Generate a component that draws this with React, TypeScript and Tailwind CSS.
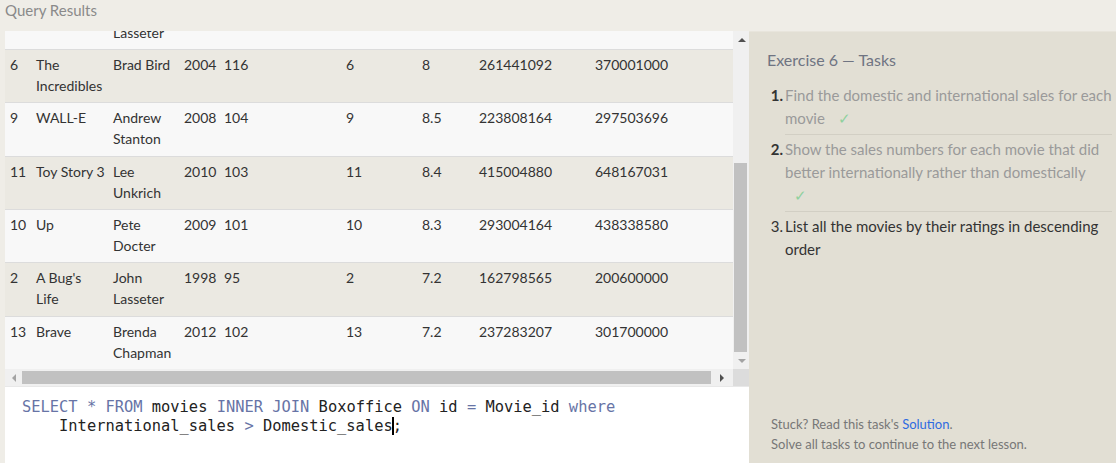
import { useLayoutEffect, useRef } from "react";

interface Row {
  id: string;
  title: string[];
  director: string[];
  year: string;
  length: string;
  movieId: string;
  rating: string;
  domestic: string;
  intl: string;
}

const rows: Row[] = [
  { id: "5", title: ["Finding", "Nemo"], director: ["Andrew", "Stanton"], year: "2003", length: "107", movieId: "5", rating: "8.2", domestic: "380843261", intl: "555900000" },
  { id: "14", title: ["Monsters", "University"], director: ["Dan", "Scanlon"], year: "2013", length: "110", movieId: "14", rating: "7.4", domestic: "268492764", intl: "475066843" },
  { id: "8", title: ["Ratatouille"], director: ["Brad Bird"], year: "2007", length: "115", movieId: "8", rating: "8", domestic: "206445654", intl: "417277164" },
  { id: "12", title: ["Cars 2"], director: ["John", "Lasseter"], year: "2011", length: "120", movieId: "12", rating: "6.4", domestic: "191452396", intl: "368400000" },
  { id: "6", title: ["The", "Incredibles"], director: ["Brad Bird"], year: "2004", length: "116", movieId: "6", rating: "8", domestic: "261441092", intl: "370001000" },
  { id: "9", title: ["WALL-E"], director: ["Andrew", "Stanton"], year: "2008", length: "104", movieId: "9", rating: "8.5", domestic: "223808164", intl: "297503696" },
  { id: "11", title: ["Toy Story 3"], director: ["Lee", "Unkrich"], year: "2010", length: "103", movieId: "11", rating: "8.4", domestic: "415004880", intl: "648167031" },
  { id: "10", title: ["Up"], director: ["Pete", "Docter"], year: "2009", length: "101", movieId: "10", rating: "8.3", domestic: "293004164", intl: "438338580" },
  { id: "2", title: ["A Bug's", "Life"], director: ["John", "Lasseter"], year: "1998", length: "95", movieId: "2", rating: "7.2", domestic: "162798565", intl: "200600000" },
  { id: "13", title: ["Brave"], director: ["Brenda", "Chapman"], year: "2012", length: "102", movieId: "13", rating: "7.2", domestic: "237283207", intl: "301700000" },
];

const columns = ["Id", "Title", "Director", "Year", "Length_minutes", "Movie_id", "Rating", "Domestic_sales", "International_sales"];

const Lines = ({ lines }: { lines: string[] }) => (
  <>
    {lines.map((l) => (
      <span key={l} className="block whitespace-nowrap">
        {l}
      </span>
    ))}
  </>
);

const Arrow = ({ dir, dark }: { dir: "up" | "down" | "left" | "right"; dark?: boolean }) => {
  const points = {
    up: "0,4 4,0 8,4",
    down: "0,0 8,0 4,4",
    left: "4,0 4,8 0,4",
    right: "0,0 0,8 4,4",
  }[dir];
  const vertical = dir === "up" || dir === "down";
  return (
    <svg width={vertical ? 8 : 4} height={vertical ? 4 : 8} viewBox={vertical ? "0 0 8 4" : "0 0 4 8"}>
      <polygon points={points} fill={dark ? "#505050" : "#a3a3a3"} />
    </svg>
  );
};

const Kw = ({ children }: { children: React.ReactNode }) => <span className="text-[#6774a6]">{children}</span>;

const Check = () => <span className="ml-[9px] text-[#8fd19e]">✓</span>;

const cell = "pl-[5px] pt-[4px] pb-[6.3px] align-top leading-[21px]";

export default function App() {
  const scroller = useRef<HTMLDivElement>(null);
  const anchor = useRef<HTMLTableRowElement>(null);

  useLayoutEffect(() => {
    const box = scroller.current;
    const row = anchor.current;
    if (!box || !row) return;
    const offset = row.getBoundingClientRect().top - box.getBoundingClientRect().top + box.scrollTop;
    box.scrollTop = offset - 19;
  }, []);

  return (
    <div className="flex h-[463px] w-[1116px] flex-col overflow-hidden bg-[#efede7] font-['Lato','Open_Sans',sans-serif] text-[#333]">
      <div className="h-[31px] pl-[5px] text-[15px] leading-[20px] text-[#8a8a8a]">Query Results</div>

      <div className="flex min-h-0 flex-1">
        <section className="flex w-[749px] flex-col pl-[5px]">
          <div className="flex h-[338px]">
            <div ref={scroller} className="w-[728px] overflow-hidden bg-[#f8f8f8]">
              <table className="w-[742px] table-fixed border-collapse text-left text-[14px]">
                <colgroup>
                  <col className="w-[26px]" />
                  <col className="w-[77px]" />
                  <col className="w-[71px]" />
                  <col className="w-[40px]" />
                  <col className="w-[122px]" />
                  <col className="w-[76px]" />
                  <col className="w-[57px]" />
                  <col className="w-[116px]" />
                  <col className="w-[157px]" />
                </colgroup>
                <thead>
                  <tr>
                    {columns.map((c) => (
                      <th key={c} className="pl-[5px] pt-[6px] pb-[6px] align-top font-bold leading-[21px]">
                        {c}
                      </th>
                    ))}
                  </tr>
                </thead>
                <tbody>
                  {rows.map((r, i) => (
                    <tr
                      key={r.id}
                      ref={r.id === "6" ? anchor : undefined}
                      className={`border-t border-[#dcdcdc] ${i % 2 === 0 ? "bg-[#ebe9e2]" : "bg-[#f8f8f8]"}`}
                    >
                      <td className={cell}>{r.id}</td>
                      <td className={cell}>
                        <Lines lines={r.title} />
                      </td>
                      <td className={cell}>
                        <Lines lines={r.director} />
                      </td>
                      <td className={cell}>{r.year}</td>
                      <td className={cell}>{r.length}</td>
                      <td className={cell}>{r.movieId}</td>
                      <td className={cell}>{r.rating}</td>
                      <td className={cell}>{r.domestic}</td>
                      <td className={cell}>{r.intl}</td>
                    </tr>
                  ))}
                  <tr className="h-[42px] border-t border-[#dcdcdc]">
                    <td colSpan={9} />
                  </tr>
                </tbody>
              </table>
            </div>

            {/* vertical scrollbar */}
            <div className="flex w-[16px] flex-col bg-[#f0f0f0]">
              <div className="flex h-[17px] items-center justify-center pl-[1px]">
                <Arrow dir="up" dark />
              </div>
              <div className="mt-[115px] ml-[1px] h-[189px] w-[13px] bg-[#c1c1c1]" />
              <div className="flex h-[17px] items-center justify-center pl-[1px]">
                <Arrow dir="down" />
              </div>
            </div>
          </div>

          {/* horizontal scrollbar */}
          <div className="flex h-[17px]">
            <div className="flex w-[728px] items-center bg-[#f0f0f0]">
              <div className="flex w-[17px] justify-center">
                <Arrow dir="left" />
              </div>
              <div className="h-[13px] w-[689px] bg-[#c1c1c1]" />
              <div className="flex w-[22px] justify-center">
                <Arrow dir="right" dark />
              </div>
            </div>
            <div className="w-[16px] bg-[#dcdcdc]" />
          </div>

          {/* editor */}
          <div className="flex-1 border-t border-[#e8e8e8] bg-white pt-[11px] pl-[17px] font-['DejaVu_Sans_Mono',monospace] text-[15.4px] leading-[19px] text-[#222] whitespace-pre">
            <div>
              <Kw>SELECT</Kw> <Kw>*</Kw> <Kw>FROM</Kw> movies <Kw>INNER JOIN</Kw> Boxoffice <Kw>ON</Kw> id <Kw>=</Kw> Movie_id <Kw>where</Kw>
            </div>
            <div>
              {"    "}International_sales <Kw>&gt;</Kw> Domestic_sales
              <span className="-mx-[1px] inline-block h-[18px] w-[2px] bg-black align-[-4px]" />;
            </div>
          </div>
        </section>

        <aside className="flex flex-1 flex-col border-t border-[#e8e5dc] bg-[#e2dfd4] pt-[18px] pr-[4px] pl-[18px]">
          <h2 className="text-[16px] leading-[20px] text-[#6f7482]">Exercise 6 — Tasks</h2>

          <ol className="mt-[14px] text-[15px] leading-[23px]">
            <li className="flex">
              <span className="w-[18px] shrink-0 pr-[2px] text-right font-bold text-[#333]">1.</span>
              <div className="flex-1 border-b border-[#d2cfc4] pb-[4px] text-[#9a9a9a]">
                <span className="block">Find the domestic and international sales for each</span>
                <span className="block">
                  movie <Check />
                </span>
              </div>
            </li>
            <li className="flex pt-[3px]">
              <span className="w-[18px] shrink-0 pr-[2px] text-right font-bold text-[#333]">2.</span>
              <div className="flex-1 border-b border-[#d2cfc4] pb-[4px] text-[#9a9a9a]">
                <span className="block">Show the sales numbers for each movie that did</span>
                <span className="block">better internationally rather than domestically</span>
                <span className="block">
                  <Check />
                </span>
              </div>
            </li>
            <li className="flex pt-[3px]">
              <span className="w-[18px] shrink-0 pr-[2px] text-right text-[#333]">3.</span>
              <div className="flex-1 text-[#333]">
                <span className="block">List all the movies by their ratings in descending</span>
                <span className="block">order</span>
              </div>
            </li>
          </ol>

          <div className="mt-auto pb-[9px] pl-[4px] text-[13px] leading-[20px] text-[#777]">
            <p>
              Stuck? Read this task's <span className="text-[#2f6be0]">Solution</span>.
            </p>
            <p>Solve all tasks to continue to the next lesson.</p>
          </div>
        </aside>
      </div>
    </div>
  );
}
